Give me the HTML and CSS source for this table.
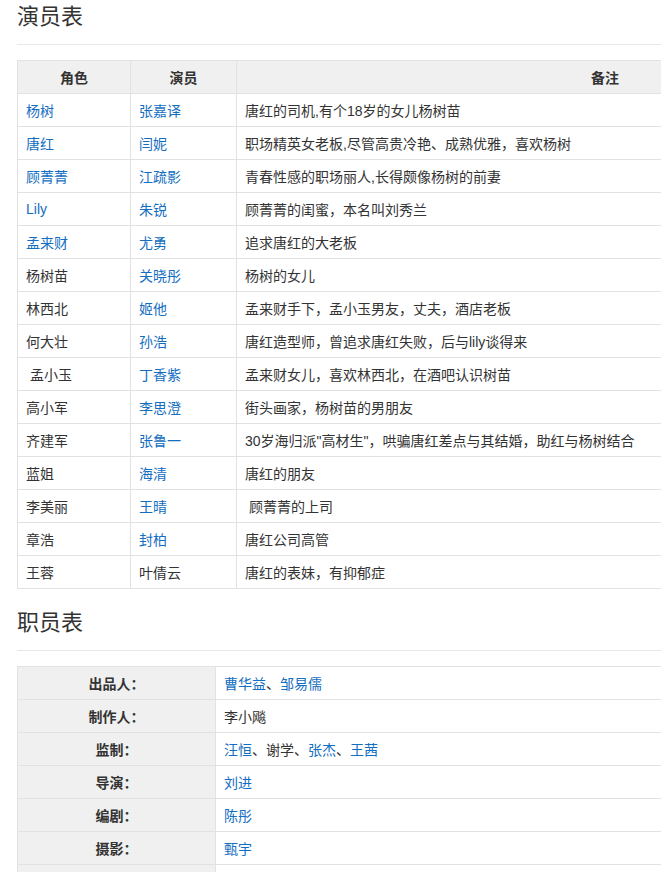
FILE: index.html
```html
<!DOCTYPE html>
<html lang="zh-CN">
<head>
<meta charset="utf-8">
<title>演员表</title>
<link rel="stylesheet" href="styles.css">
</head>
<body>
<div class="page">
  <section class="block">
    <h2 class="title">演员表</h2>
    <table class="grid cast">
      <colgroup><col class="c-role"><col class="c-actor"><col class="c-note"></colgroup>
      <thead>
        <tr><th>角色</th><th>演员</th><th>备注</th></tr>
      </thead>
      <tbody>
        <tr><td><a href="#">杨树</a></td><td><a href="#">张嘉译</a></td><td>唐红的司机,有个18岁的女儿杨树苗</td></tr>
        <tr><td><a href="#">唐红</a></td><td><a href="#">闫妮</a></td><td>职场精英女老板,尽管高贵冷艳、成熟优雅，喜欢杨树</td></tr>
        <tr><td><a href="#">顾菁菁</a></td><td><a href="#">江疏影</a></td><td>青春性感的职场丽人,长得颇像杨树的前妻</td></tr>
        <tr><td><a href="#">Lily</a></td><td><a href="#">朱锐</a></td><td>顾菁菁的闺蜜，本名叫刘秀兰</td></tr>
        <tr><td><a href="#">孟来财</a></td><td><a href="#">尤勇</a></td><td>追求唐红的大老板</td></tr>
        <tr><td>杨树苗</td><td><a href="#">关晓彤</a></td><td>杨树的女儿</td></tr>
        <tr><td>林西北</td><td><a href="#">姬他</a></td><td>孟来财手下，孟小玉男友，丈夫，酒店老板</td></tr>
        <tr><td>何大壮</td><td><a href="#">孙浩</a></td><td>唐红造型师，曾追求唐红失败，后与lily谈得来</td></tr>
        <tr><td>&nbsp;孟小玉</td><td><a href="#">丁香紫</a></td><td>孟来财女儿，喜欢林西北，在酒吧认识树苗</td></tr>
        <tr><td>高小军</td><td><a href="#">李思澄</a></td><td>街头画家，杨树苗的男朋友</td></tr>
        <tr><td>齐建军</td><td><a href="#">张鲁一</a></td><td>30岁海归派"高材生"，哄骗唐红差点与其结婚，助红与杨树结合</td></tr>
        <tr><td>蓝姐</td><td><a href="#">海清</a></td><td>唐红的朋友</td></tr>
        <tr><td>李美丽</td><td><a href="#">王晴</a></td><td>&nbsp;顾菁菁的上司</td></tr>
        <tr><td>章浩</td><td><a href="#">封柏</a></td><td>唐红公司高管</td></tr>
        <tr><td>王蓉</td><td>叶倩云</td><td>唐红的表妹，有抑郁症</td></tr>
      </tbody>
    </table>
  </section>

  <section class="block">
    <h2 class="title">职员表</h2>
    <table class="grid staff">
      <colgroup><col class="c-label"><col class="c-value"></colgroup>
      <tbody>
        <tr><th>出品人：</th><td><a href="#">曹华益</a>、<a href="#">邹易儒</a></td></tr>
        <tr><th>制作人：</th><td>李小飚</td></tr>
        <tr><th>监制：</th><td><a href="#">汪恒</a>、谢学、<a href="#">张杰</a>、<a href="#">王茜</a></td></tr>
        <tr><th>导演：</th><td><a href="#">刘进</a></td></tr>
        <tr><th>编剧：</th><td><a href="#">陈彤</a></td></tr>
        <tr><th>摄影：</th><td><a href="#">甄宇</a></td></tr>
        <tr><th></th><td></td></tr>
      </tbody>
    </table>
  </section>
</div>
</body>
</html>
```

FILE: styles.css
```css
html, body {
  margin: 0;
  padding: 0;
  overflow: hidden;
  background: #fff;
}

body {
  font-family: Arial, "Liberation Sans", "Noto Sans CJK SC", sans-serif;
  font-size: 14px;
  color: #333;
}

.page {
  padding: 0 0 0 17px;
  width: 1200px;
}

.block + .block {
  margin-top: 17px;
}

.title {
  margin: 0 0 15px 0;
  padding: 0 0 11px 0;
  font-size: 22px;
  line-height: 33px;
  font-weight: normal;
  color: #333;
  border-bottom: 1px solid #e8e8e8;
  width: 644px;
}

.grid {
  border-collapse: collapse;
  table-layout: fixed;
  width: 957px;
}

.grid th,
.grid td {
  border: 1px solid #e2e2e2;
  height: 32px;
  padding: 0 8px;
  vertical-align: middle;
  text-align: left;
  white-space: nowrap;
  overflow: hidden;
}

.grid th {
  background: #f0f0f0;
  font-weight: bold;
  text-align: center;
  color: #333;
}

.grid a {
  color: #136ec2;
  text-decoration: none;
}

.c-role { width: 113px; }
.c-actor { width: 106px; }
.c-note { width: auto; }

.c-label { width: 198px; }
.c-value { width: auto; }
```
